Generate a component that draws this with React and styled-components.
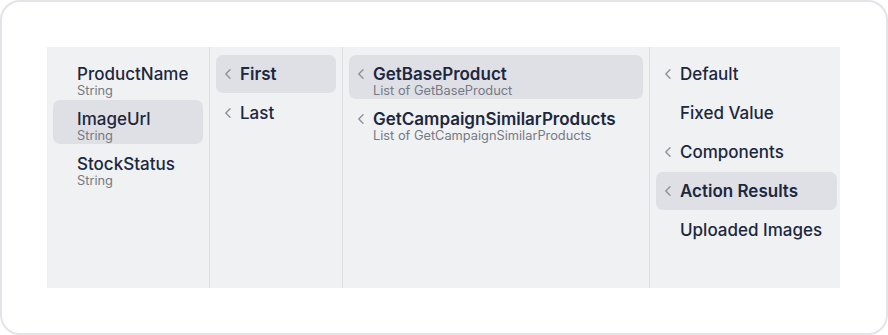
import styled, { createGlobalStyle } from 'styled-components';

const GlobalStyle = createGlobalStyle`
  html, body {
    margin: 0;
    padding: 0;
    background: #ffffff;
  }
  body {
    font-family: Inter, "Noto Sans", sans-serif;
  }
`;

const Card = styled.div`
  width: 888px;
  height: 335px;
  box-sizing: border-box;
  border: 2px solid #e2e4e8;
  border-radius: 20px;
  background: #ffffff;
  padding: 45px 46px 45px 45px;
`;

const Browser = styled.div`
  display: flex;
  height: 241px;
  background: #f0f1f3;
`;

const Column = styled.div`
  width: ${(p) => p.$width}px;
  flex-shrink: 0;
  box-sizing: border-box;
  padding: 8px ${(p) => (p.$last ? 4 : 6)}px 8px 6px;
  display: flex;
  flex-direction: column;
  gap: 1px;
  border-right: ${(p) => (p.$last ? 'none' : '1px solid #dcdee3')};
`;

const Item = styled.div`
  display: flex;
  align-items: ${(p) => (p.$tall ? 'flex-start' : 'center')};
  height: ${(p) => (p.$tall ? 44 : 38)}px;
  padding-left: ${(p) => (p.$indent ? 24 : 8)}px;
  padding-top: ${(p) => (p.$tall ? 8 : 0)}px;
  border-radius: 7px;
  background: ${(p) => (p.$active ? '#dfe0e5' : 'transparent')};
  box-sizing: border-box;
`;

const Chevron = styled.span`
  width: 16px;
  height: 22px;
  flex-shrink: 0;
  display: flex;
  align-items: center;
  color: #8b919c;
  svg {
    display: block;
  }
`;

const Texts = styled.div`
  display: flex;
  flex-direction: column;
`;

const Title = styled.div`
  font-size: 17px;
  line-height: 22px;
  font-weight: ${(p) => (p.$strong ? 600 : 500)};
  color: #1c2740;
  white-space: nowrap;
`;

const Sub = styled.div`
  font-size: 12.8px;
  line-height: 12px;
  font-weight: 400;
  color: #747a85;
  white-space: nowrap;
`;

const Arrow = () => (
  <svg width="8" height="12" viewBox="0 0 8 12" fill="none">
    <path d="M6 1.8L1.8 6L6 10.2" stroke="currentColor" strokeWidth="1.4" strokeLinecap="round" strokeLinejoin="round" />
  </svg>
);

const fields = [
  { name: 'ProductName', type: 'String' },
  { name: 'ImageUrl', type: 'String', active: true },
  { name: 'StockStatus', type: 'String' },
];

const picks = [
  { name: 'First', active: true },
  { name: 'Last' },
];

const actions = [
  { name: 'GetBaseProduct', sub: 'List of GetBaseProduct', active: true },
  { name: 'GetCampaignSimilarProducts', sub: 'List of GetCampaignSimilarProducts' },
];

const sources = [
  { name: 'Default', arrow: true },
  { name: 'Fixed Value' },
  { name: 'Components', arrow: true },
  { name: 'Action Results', arrow: true, active: true },
  { name: 'Uploaded Images' },
];

const App = () => {
  return (
    <>
      <GlobalStyle />
      <Card>
        <Browser>
          <Column $width={163}>
            {fields.map((f) => (
              <Item key={f.name} $tall $indent $active={f.active}>
                <Texts>
                  <Title>{f.name}</Title>
                  <Sub>{f.type}</Sub>
                </Texts>
              </Item>
            ))}
          </Column>
          <Column $width={133}>
            {picks.map((p) => (
              <Item key={p.name} $active={p.active}>
                <Chevron><Arrow /></Chevron>
                <Title $strong={p.active}>{p.name}</Title>
              </Item>
            ))}
          </Column>
          <Column $width={307}>
            {actions.map((a) => (
              <Item key={a.name} $tall $active={a.active}>
                <Chevron><Arrow /></Chevron>
                <Texts>
                  <Title $strong>{a.name}</Title>
                  <Sub>{a.sub}</Sub>
                </Texts>
              </Item>
            ))}
          </Column>
          <Column $width={191} $last>
            {sources.map((s) => (
              <Item key={s.name} $active={s.active}>
                <Chevron>{s.arrow && <Arrow />}</Chevron>
                <Title $strong={s.active}>{s.name}</Title>
              </Item>
            ))}
          </Column>
        </Browser>
      </Card>
    </>
  );
};

export default App;
